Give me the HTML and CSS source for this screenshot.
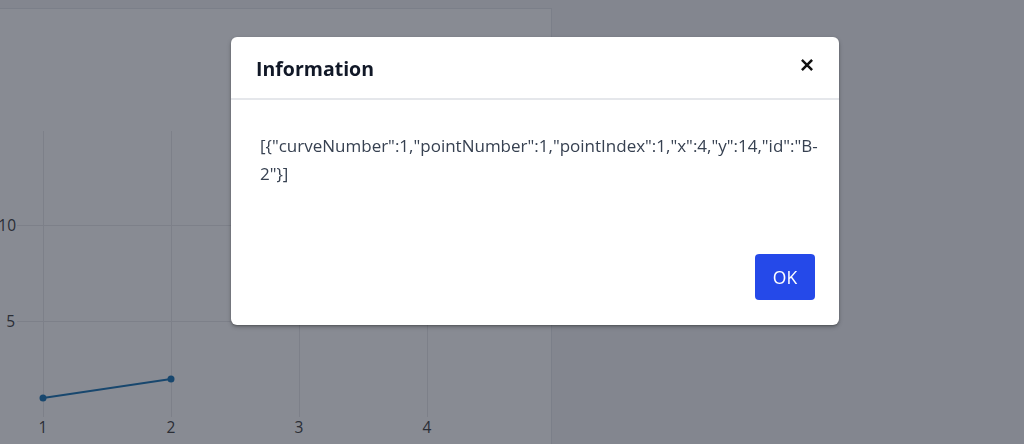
FILE: index.html
```html
<!DOCTYPE html>
<html lang="en">
<head>
<meta charset="utf-8">
<title>Information</title>
<link rel="stylesheet" href="styles.css">
</head>
<body>
<div class="page">
  <div class="chart-card">
    <svg class="chart" width="551" height="435" viewBox="0 9 551 435" xmlns="http://www.w3.org/2000/svg">
      <g class="grid">
        <line x1="43" y1="131" x2="43" y2="417"/>
        <line x1="171" y1="131" x2="171" y2="417"/>
        <line x1="299" y1="131" x2="299" y2="417"/>
        <line x1="427" y1="131" x2="427" y2="417"/>
        <line x1="17" y1="225" x2="540" y2="225"/>
        <line x1="17" y1="321" x2="540" y2="321"/>
      </g>
      <g class="ticks">
        <text x="43" y="433" text-anchor="middle">1</text>
        <text x="171" y="433" text-anchor="middle">2</text>
        <text x="299" y="433" text-anchor="middle">3</text>
        <text x="427" y="433" text-anchor="middle">4</text>
        <text x="16" y="231" text-anchor="end">10</text>
        <text x="15" y="327" text-anchor="end">5</text>
      </g>
      <polyline class="trace" points="43,398 171,379"/>
      <circle class="marker" cx="43" cy="398" r="3.5"/>
      <circle class="marker" cx="171" cy="379" r="3.5"/>
    </svg>
  </div>
</div>
<div class="overlay">
  <div class="modal" role="dialog" aria-labelledby="modal-title">
    <div class="modal-header">
      <h2 class="modal-title" id="modal-title">Information</h2>
      <button class="modal-close" aria-label="Close">
        <svg width="12" height="12" viewBox="0 0 12 12" xmlns="http://www.w3.org/2000/svg"><path d="M1.8 1.8 L10.2 10.2 M10.2 1.8 L1.8 10.2" stroke="#111" stroke-width="2.5" stroke-linecap="square" fill="none"/></svg>
      </button>
    </div>
    <div class="modal-body">
      <p class="modal-text">[{"curveNumber":1,"pointNumber":1,"pointIndex":1,"x":4,"y":14,"id":"B-2"}]</p>
    </div>
    <div class="modal-footer">
      <button class="btn-ok">OK</button>
    </div>
  </div>
</div>
</body>
</html>
```

FILE: styles.css
```css
html, body {
  margin: 0;
  padding: 0;
}

body {
  background: #f4f5f7;
  font-family: "Open Sans", "Noto Sans", sans-serif;
  width: 1024px;
  height: 444px;
  overflow: hidden;
}

.page {
  padding-top: 8px;
}

.chart-card {
  width: 551px;
  height: 435px;
  background: #ffffff;
  border-top: 1px solid #e5e7eb;
  border-right: 1px solid #e5e7eb;
  overflow: hidden;
}

.chart {
  display: block;
}

.grid line {
  stroke: #e8e8ea;
  stroke-width: 1;
  shape-rendering: crispEdges;
}

.ticks text {
  font-family: "Open Sans", sans-serif;
  font-size: 15.5px;
  fill: #444444;
}

.trace {
  fill: none;
  stroke: #1f77b4;
  stroke-width: 2;
}

.marker {
  fill: #1f77b4;
}

.overlay {
  position: fixed;
  inset: 0;
  background: rgba(17, 24, 39, 0.5);
  padding: 37px 0 0 231px;
}

.modal {
  width: 608px;
  background: #ffffff;
  border-radius: 6px;
  box-shadow: 0 2px 4px rgba(0, 0, 0, 0.25), 0 1px 2px rgba(0, 0, 0, 0.2);
  overflow: hidden;
}

.modal-header {
  display: flex;
  justify-content: space-between;
  align-items: flex-start;
  padding: 19px 26px 0 25px;
  box-sizing: border-box;
  height: 63px;
  border-bottom: 2px solid #e5e7eb;
}

.modal-title {
  margin: 0;
  font-size: 19.5px;
  font-weight: 700;
  line-height: 26px;
  color: #111827;
}

.modal-close {
  margin: 3px 0 0 0;
  padding: 0;
  border: 0;
  background: transparent;
  width: 12px;
  height: 12px;
  display: flex;
}

.modal-body {
  padding: 32px 19px 42px 29px;
}

.modal-text {
  margin: 0;
  font-size: 17px;
  line-height: 28px;
  color: #374151;
}

.modal-footer {
  display: flex;
  justify-content: flex-end;
  padding: 24px 24px 25px;
}

.btn-ok {
  width: 60px;
  height: 46px;
  border: 0;
  border-radius: 4px;
  background: #2549e9;
  color: #ffffff;
  font-family: "Open Sans", sans-serif;
  font-size: 17.5px;
  padding: 0;
}
```
